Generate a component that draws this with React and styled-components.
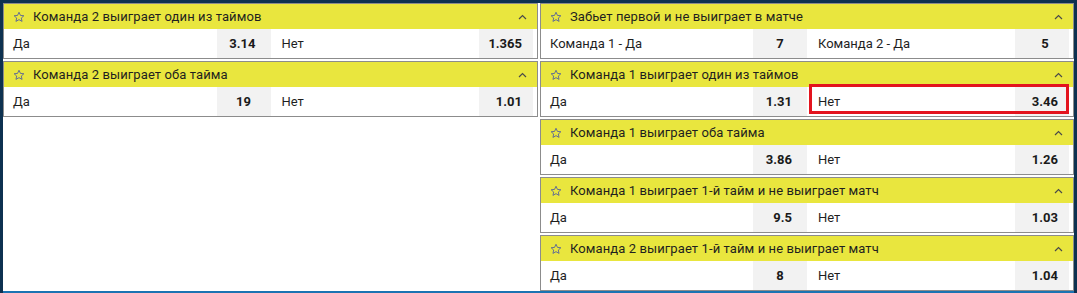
import React from "react";
import styled, { createGlobalStyle } from "styled-components";

const GlobalStyle = createGlobalStyle`
  html, body {
    margin: 0;
    padding: 0;
    background: #0d3150;
  }
  body {
    font-family: Roboto, "Liberation Sans", Arial, sans-serif;
  }
`;

// CSS
const Frame = styled.div`
  width: 1077px;
  height: 293px;
  box-sizing: border-box;
  padding: 3px 3px 0 3px;
  background: #0d3150;
`;
const Board = styled.div`
  height: 288px;
  background: #ffffff;
  border-bottom: 2px solid #1b73b2;
  display: grid;
  grid-template-columns: 535px 1fr;
  column-gap: 2px;
  align-items: start;
`;
const Column = styled.div`
  display: flex;
  flex-direction: column;
  gap: 2px;
`;
const Market = styled.div`
  border: 1px solid #8c8c8c;
  background: #ffffff;
`;
const MarketHeader = styled.div`
  height: 25px;
  background: #e9e63e;
  display: flex;
  align-items: center;
  padding: 0 10px 0 9px;
  color: #1f1f1f;
  font-size: 13px;
`;
const Title = styled.span`
  flex: 1;
  margin-left: 8px;
  white-space: nowrap;
  letter-spacing: 0.1px;
`;
const Row = styled.div`
  height: 29px;
  display: flex;
  padding: 0 4px;
`;
const Outcome = styled.div`
  flex: 1;
  display: flex;
  align-items: stretch;
  font-size: 13px;
  position: relative;
  ${(p) =>
    p.$selected &&
    `
    &::after {
      content: "";
      position: absolute;
      left: 2px;
      right: 0;
      top: -3px;
      bottom: 2px;
      border: 3px solid #e3141e;
      pointer-events: none;
    }
  `}
`;
const Label = styled.div`
  flex: 1;
  display: flex;
  align-items: center;
  padding-left: ${(p) => (p.$second ? "11px" : "5px")};
  color: #1f1f1f;
`;
const Odds = styled.div`
  width: 54px;
  background: #f2f2f2;
  display: flex;
  align-items: center;
  justify-content: ${(p) => (p.$center ? "center" : "flex-end")};
  padding-right: ${(p) => (p.$center ? "0" : p.$last ? "11px" : "15px")};
  padding-left: ${(p) => (p.$center && p.$last ? "6px" : "0")};
  box-sizing: border-box;
  font-weight: 700;
  color: #1a1a1a;
`;

function Star() {
  return (
    <svg width="12" height="12" viewBox="0 0 24 24" fill="none">
      <path
        d="M12 2.5l2.9 6.3 6.8.7-5.1 4.6 1.5 6.7L12 17.3l-6.1 3.5 1.5-6.7-5.1-4.6 6.8-.7z"
        stroke="#55629a"
        strokeWidth="1.8"
        strokeLinejoin="round"
      />
    </svg>
  );
}

function Chevron() {
  return (
    <svg width="9" height="6" viewBox="0 0 9 6">
      <polyline points="1,5 4.5,1.5 8,5" fill="none" stroke="#4a4a4a" strokeWidth="1.2" />
    </svg>
  );
}

const left = [
  { title: "Команда 2 выиграет один из таймов", a: ["Да", "3.14"], b: ["Нет", "1.365"] },
  { title: "Команда 2 выиграет оба тайма", a: ["Да", "19"], b: ["Нет", "1.01"] },
];

const right = [
  { title: "Забьет первой и не выиграет в матче", a: ["Команда 1 - Да", "7"], b: ["Команда 2 - Да", "5"] },
  { title: "Команда 1 выиграет один из таймов", a: ["Да", "1.31"], b: ["Нет", "3.46"], selected: true },
  { title: "Команда 1 выиграет оба тайма", a: ["Да", "3.86"], b: ["Нет", "1.26"] },
  { title: "Команда 1 выиграет 1-й тайм и не выиграет матч", a: ["Да", "9.5"], b: ["Нет", "1.03"] },
  { title: "Команда 2 выиграет 1-й тайм и не выиграет матч", a: ["Да", "8"], b: ["Нет", "1.04"] },
];

function MarketBlock({ title, a, b, selected }) {
  const center = (v) => v.length <= 2;
  return (
    <Market>
      <MarketHeader>
        <Star />
        <Title>{title}</Title>
        <Chevron />
      </MarketHeader>
      <Row>
        <Outcome>
          <Label>{a[0]}</Label>
          <Odds $center={center(a[1])}>{a[1]}</Odds>
        </Outcome>
        <Outcome $selected={selected}>
          <Label $second>{b[0]}</Label>
          <Odds $last $center={center(b[1])}>{b[1]}</Odds>
        </Outcome>
      </Row>
    </Market>
  );
}

export default function App() {
  return (
    <Frame>
      <GlobalStyle />
      <Board>
        <Column>
          {left.map((m) => (
            <MarketBlock key={m.title} {...m} />
          ))}
        </Column>
        <Column>
          {right.map((m) => (
            <MarketBlock key={m.title} {...m} />
          ))}
        </Column>
      </Board>
    </Frame>
  );
}
